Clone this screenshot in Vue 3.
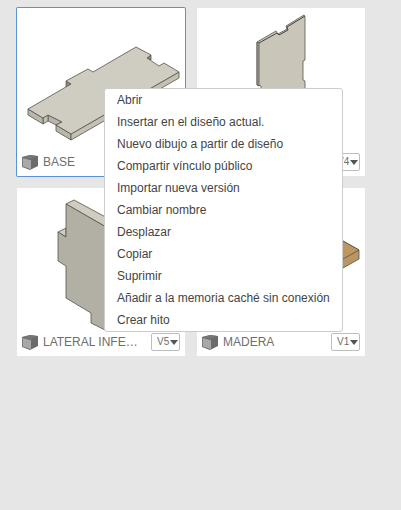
<script setup>
import { ref } from 'vue'

const actions = [
  'Abrir',
  'Insertar en el diseño actual.',
  'Nuevo dibujo a partir de diseño',
  'Compartir vínculo público',
  'Importar nueva versión',
  'Cambiar nombre',
  'Desplazar',
  'Copiar',
  'Suprimir',
  'Añadir a la memoria caché sin conexión',
  'Crear hito',
]

// Each part is a list of filled faces followed by loose edge lines.
const cards = ref([
  {
    id: 'base',
    name: 'BASE',
    version: '',
    selected: true,
    faces: [
      { d: 'M31 107V113L39 117L45 114Z', fill: '#b9b7a9' },
      { d: 'M26 110V116L31 113V107Z', fill: '#c4c1b4' },
      { d: 'M11 101V107L26 116V110Z', fill: '#b9b7a9' },
      { d: 'M39 117V123L54 132V126Z', fill: '#b9b7a9' },
      { d: 'M54 126V132L162 70V64Z', fill: '#c4c1b4' },
      { d: 'M49 73V79L54 76ZM130 50L134 47V52Z', fill: '#8f8d82' },
      { d: 'M11 101L54 76L49 73L71 61L76 64L119 39L134 47L130 50L142 58L147 55L162 64L54 126L39 117L45 114L31 107L26 110Z', fill: '#cfccc2' },
    ],
    edges: '',
  },
  {
    id: 'panel',
    name: '',
    version: 'V4',
    faces: [
      { d: 'M60 34L79 23L81 26L90 21L89 18L107 7L108 9V52L106 53V72L108 73V84H64V78L60 77Z', fill: '#c9c5b9' },
      { d: 'M60 34L62 35V78L60 77Z', fill: '#a5a297' },
    ],
    edges: 'M62 35L80 25L82 27L91 22L90 19L108 8',
  },
  {
    id: 'lateral',
    name: 'LATERAL INFE…',
    version: 'V5',
    faces: [
      { d: 'M49 16L57 12L96 33V43Z', fill: '#cfccc2' },
      { d: 'M41 44L49 40V49Z', fill: '#cfccc2' },
      { d: 'M49 16L96 43V146L74 135V125L49 110V78L41 73V44L49 49Z', fill: '#b2afa4' },
    ],
    edges: '',
  },
  {
    id: 'madera',
    name: 'MADERA',
    version: 'V1',
    faces: [
      { d: 'M130 44L162 62V71L130 89Z', fill: '#b99761' },
      { d: 'M130 44L162 62L130 80Z', fill: '#bd975d' },
    ],
    edges: '',
  },
])
</script>

<template>
  <main class="browser">
    <section class="grid">
      <article v-for="card in cards" :key="card.id" class="card" :class="{ selected: card.selected }">
        <svg class="preview" viewBox="0 0 168 144" aria-hidden="true">
          <path v-for="face in card.faces" :key="face.d" :d="face.d" :fill="face.fill" class="face" />
          <path :d="card.edges" class="edge" />
        </svg>
        <footer class="caption">
          <svg class="cube" viewBox="0 0 16 16" aria-hidden="true">
            <path d="M0 3L8 1L16 2V12L8 16L0 13Z" fill="#6b6b6b" />
            <path d="M0.7 4L9 6.3V15.2L0.7 12.4Z" fill="#a8a8a8" />
            <path d="M1 3L8 1L15 2L9 5Z" fill="#777" />
          </svg>
          <h2 class="name">{{ card.name }}</h2>
          <span v-if="card.version" class="version">
            <select v-model="card.version" :aria-label="card.name || card.version">
              <option>{{ card.version }}</option>
            </select>
            <svg class="arrow" viewBox="0 0 8 5" aria-hidden="true"><path d="M0 0H8L4 5Z" /></svg>
          </span>
        </footer>
      </article>
    </section>
    <menu class="menu">
      <li v-for="action in actions" :key="action">
        <button type="button">{{ action }}</button>
      </li>
    </menu>
  </main>
</template>

<style>
body {
  background: #e6e6e6;
}
</style>

<style scoped>
.browser {
  position: relative;
  padding: 8px 17px;
  font-family: "Liberation Sans", Arial, sans-serif;
  font-size: 12px;
}
.grid {
  display: grid;
  grid-template-columns: repeat(auto-fill, 168px);
  gap: 12px;
}
.card {
  background: #fff;
}
.card.selected {
  border-radius: 1px;
  box-shadow: 0 0 0 1px #5b92d6;
}
.preview {
  display: block;
  width: 100%;
}
.face {
  stroke: #55534c;
  stroke-width: 0.8;
  stroke-linejoin: round;
}
.edge {
  fill: none;
  stroke: #45433d;
}
.caption {
  display: flex;
  align-items: center;
  height: 20px;
  padding: 0 5px 4px;
}
.cube {
  flex: none;
  width: 16px;
  height: 16px;
  margin-right: 5px;
}
.name {
  flex: 1;
  margin: 0;
  overflow: hidden;
  color: #6e6e6e;
  font-size: 12px;
  font-weight: 400;
  line-height: 16px;
  white-space: nowrap;
}
.version {
  position: relative;
  flex: none;
}
.version select {
  display: block;
  box-sizing: border-box;
  width: 29px;
  height: 18px;
  padding: 0 0 0 5px;
  appearance: none;
  border: 1px solid #bdbdbd;
  border-radius: 2px;
  background: #fff;
  color: #6e6e6e;
  font: 10px/16px "Liberation Sans", Arial, sans-serif;
}
.arrow {
  position: absolute;
  top: 7px;
  right: 2px;
  width: 8px;
  height: 5px;
  fill: #555;
  pointer-events: none;
}
.menu {
  position: absolute;
  top: 88px;
  left: 104px;
  margin: 0;
  padding: 0;
  list-style: none;
  border: 1px solid #ccc;
  border-radius: 3px;
  background: #fff;
}
.menu button {
  display: block;
  width: 100%;
  padding: 0 12px;
  border: 0;
  background: none;
  color: #444;
  font: 12px/22px "Liberation Sans", Arial, sans-serif;
  text-align: left;
  white-space: nowrap;
}
</style>
